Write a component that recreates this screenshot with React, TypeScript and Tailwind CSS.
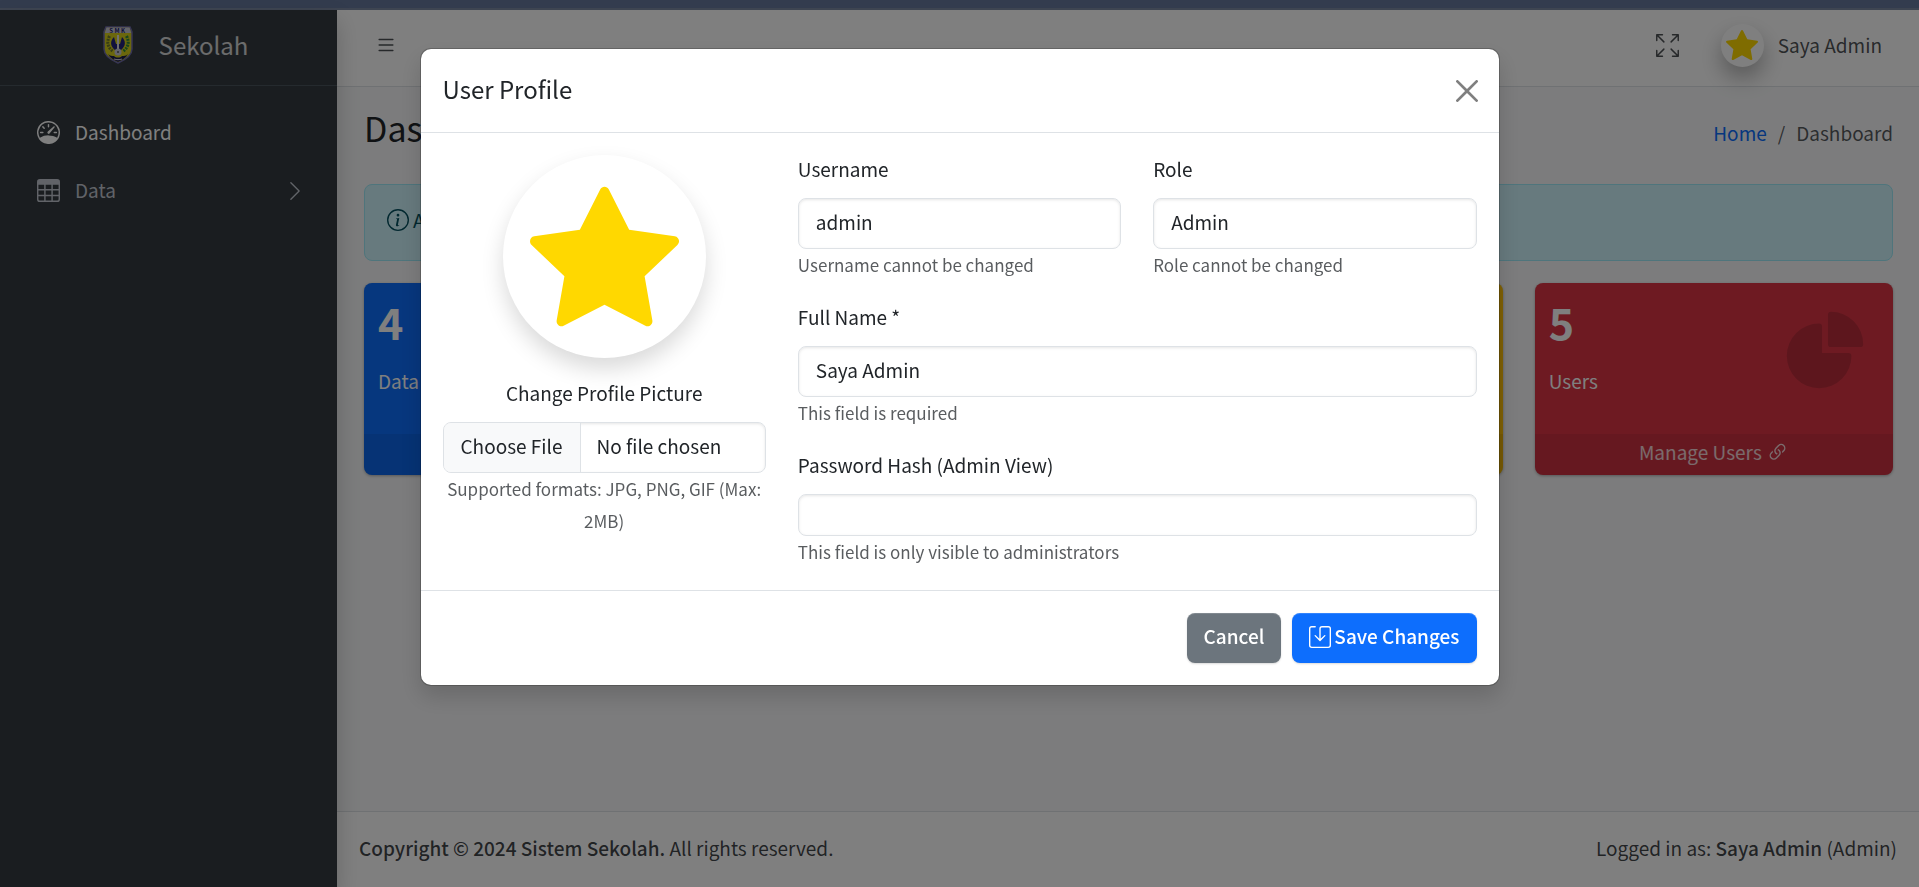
import type { InputHTMLAttributes, ReactNode } from "react";
import {
  BsArrowsFullscreen,
  BsChevronRight,
  BsInfoCircle,
  BsLink45Deg,
  BsList,
  BsSave,
  BsSpeedometer,
  BsStarFill,
  BsTable,
} from "react-icons/bs";

function SchoolLogo() {
  return (
    <svg viewBox="0 0 30 38" className="h-[38px] w-[30px]" aria-hidden="true">
      <path d="M3 1h24l2 5v17c0 6-7 11-14 14C8 34 1 29 1 23V6z" fill="#d6cf1a" stroke="#6d6aa8" strokeWidth="1.5" />
      <path d="M3.500 1.500h23l1.500 5.500H2z" fill="#c9c9d6" />
      <text x="15" y="6.500" textAnchor="middle" fontSize="6" fontWeight="700" letterSpacing="1.500" fill="#1c1c6a">SMK</text>
      <path d="M6.500 10c-3 6-2 11 3 15" fill="none" stroke="#6f7a2c" strokeWidth="3" strokeDasharray="2 1" />
      <path d="M23.500 10c3 6 2 11-3 15" fill="none" stroke="#2f8a3c" strokeWidth="3" strokeDasharray="2 1" />
      <path d="M11 11c-4 4-4 9 1 13h6c5-4 5-9 1-13l-2 7h-4z" fill="#23237a" />
      <path d="M14 9h2v14h-2z" fill="#e3e3e3" />
      <circle cx="15" cy="26" r="3.500" fill="#c9c9d6" />
      <circle cx="15" cy="26" r="1" fill="#555" />
      <path d="M5 28c2 2 4 2 6 2 2 2 6 2 8 0 2 0 4 0 6-2-2 4-6 6-10 8-4-2-8-4-10-8z" fill="#1c1c4c" />
      <path d="M11 33c3 1 5 1 8 0" fill="none" stroke="#c9c9d6" strokeWidth="1.200" />
    </svg>
  );
}

function PieIcon() {
  return (
    <svg viewBox="0 0 24 24" fill="currentColor" className="absolute right-[21px] top-5 size-[94px] text-black/15" aria-hidden="true">
      <path
        fillRule="evenodd"
        clipRule="evenodd"
        d="M2.250 13.500a8.250 8.250 0 0 1 8.250-8.250.75.75 0 0 1 .75.75v6.750H18a.75.75 0 0 1 .75.75 8.250 8.250 0 0 1-16.500 0Z"
      />
      <path
        fillRule="evenodd"
        clipRule="evenodd"
        d="M12.750 3a.75.75 0 0 1 .75-.75 8.250 8.250 0 0 1 8.250 8.250.75.75 0 0 1-.75.75h-7.500a.75.75 0 0 1-.75-.75V3Z"
      />
    </svg>
  );
}

function StatCard({ tone, value, label, action }: { tone: string; value?: string; label?: string; action?: string }) {
  return (
    <div className={`relative flex h-48 flex-col justify-between overflow-hidden rounded-lg text-white shadow-[0_1px_3px_rgba(0,0,0,0.3)] ${tone}`}>
      <div className="px-[14px] pt-[10px]">
        <h3 className="mb-4 h-14 text-[43px] font-bold leading-[56px]">{value}</h3>
        <p className="leading-8">{label}</p>
      </div>
      {value && <PieIcon />}
      <a href="#" className="flex h-[41px] items-center justify-center gap-1 bg-black/[0.07] pb-1 text-white/80">
        {action}
        {action && <BsLink45Deg className="size-[23px]" />}
      </a>
    </div>
  );
}

function Field({ id, label, hint, ...rest }: { id: string; label: ReactNode; hint: string } & InputHTMLAttributes<HTMLInputElement>) {
  return (
    <div className="flex flex-col">
      <label htmlFor={id} className="mb-[15px] leading-7">{label}</label>
      <input
        id={id}
        className="h-[51px] w-full rounded-lg border border-[#dee2e6] px-[17px] pb-1 shadow-[inset_0_1px_3px_rgba(0,0,0,0.1)] outline-none disabled:h-[42px] disabled:bg-white"
        {...rest}
      />
      <small className="text-[17px] leading-8 text-[#212529]/75">{hint}</small>
    </div>
  );
}

function ProfileDialog() {
  return (
    <div className="fixed inset-0 z-20 flex items-start justify-center bg-black/50 pt-12">
      <div
        role="dialog"
        aria-modal="true"
        aria-labelledby="profile-title"
        className="w-full max-w-[1080px] rounded-[11px] border border-black/20 bg-white bg-clip-padding text-[#212529] shadow-[0_11px_22px_rgba(0,0,0,0.15)]"
      >
        <header className="flex items-center justify-between border-b border-[#dee2e6] pb-[21px] pl-[22px] pr-[21px] pt-[22px]">
          <h5 id="profile-title" className="pb-1 text-2xl leading-9">User Profile</h5>
          <button type="button" aria-label="Close" className="text-black/50">
            <svg viewBox="0 0 16 16" fill="currentColor" className="size-[22px]">
              <path d="M.293.293a1 1 0 0 1 1.414 0L8 6.586 14.293.293a1 1 0 1 1 1.414 1.414L9.414 8l6.293 6.293a1 1 0 0 1-1.414 1.414L8 9.414l-6.293 6.293a1 1 0 0 1-1.414-1.414L6.586 8 .293 1.707a1 1 0 0 1 0-1.414" />
            </svg>
          </button>
        </header>
        <form>
          <div className="grid grid-cols-3 gap-8 px-[22px] py-[22px]">
            <div className="flex flex-col items-center text-center">
              <div className="mb-[21px] flex size-[203px] items-center justify-center rounded-full bg-white shadow-[0_11px_22px_rgba(0,0,0,0.15)]">
                <BsStarFill className="size-[149px] text-[#ffd800]" />
              </div>
              <label htmlFor="picture" className="mb-[15px] leading-7">Change Profile Picture</label>
              <input
                id="picture"
                type="file"
                className="h-[51px] w-full overflow-hidden rounded-lg border border-[#dee2e6] leading-[45px] shadow-[inset_0_1px_3px_rgba(0,0,0,0.1)] file:mr-4 file:h-[49px] file:border-0 file:border-r file:border-solid file:border-[#dee2e6] file:bg-[#f8f9fa] file:px-[17px] file:pb-1"
              />
              <small className="text-[17px] leading-8 text-[#212529]/75">Supported formats: JPG, PNG, GIF (Max: 2MB)</small>
            </div>
            <div className="col-span-2 flex flex-col gap-[22px]">
              <div className="grid grid-cols-2 gap-8">
                <Field id="username" label="Username" hint="Username cannot be changed" defaultValue="admin" readOnly />
                <Field id="role" label="Role" hint="Role cannot be changed" defaultValue="Admin" readOnly />
              </div>
              <Field id="fullname" label="Full Name *" hint="This field is required" defaultValue="Saya Admin" />
              <Field id="hash" label="Password Hash (Admin View)" hint="This field is only visible to administrators" disabled />
            </div>
          </div>
          <footer className="flex justify-end gap-[11px] border-t border-[#dee2e6] px-[22px] py-[22px] font-medium text-white">
            <button type="button" className="h-[50px] rounded-lg bg-[#6c757d] px-[17px] pb-[3px] shadow-[inset_0_1px_0_rgba(255,255,255,0.15),0_1px_2px_rgba(0,0,0,0.15)]">
              Cancel
            </button>
            <button type="button" className="flex h-[50px] items-center gap-[3px] rounded-lg bg-[#0d6efd] px-[17px] pb-[3px] shadow-[inset_0_1px_0_rgba(255,255,255,0.15),0_1px_2px_rgba(0,0,0,0.15)]">
              <BsSave className="size-[22px]" />
              Save Changes
            </button>
          </footer>
        </form>
      </div>
    </div>
  );
}

export default function App() {
  return (
    <div className="flex h-screen flex-col bg-[#f8f9fa] font-['Noto_Sans_CJK_SC',sans-serif] text-[19px] text-[#212529]">
      <div className="h-[10px] shrink-0 border-b-2 border-[#7d8aa3] bg-[#66789c]" />
      <div className="flex min-h-0 flex-1">
        <aside className="z-10 w-[337px] shrink-0 bg-[#343a40] shadow-[0_11px_22px_rgba(0,0,0,0.2)]">
          <a href="#" className="flex h-[76px] items-center justify-center gap-[26px] border-b border-[#4b545c] pb-[5px] pl-[14px] text-2xl text-white/80">
            <SchoolLogo />
            Sekolah
          </a>
          <nav className="flex flex-col gap-[5px] px-[11px] pt-5 text-[#c2c7d0]">
            <a href="#" className="flex h-[53px] items-center gap-[15px] pl-[26px] pr-5 text-white">
              <BsSpeedometer className="size-[23px]" />
              Dashboard
            </a>
            <a href="#" className="flex h-[53px] items-center gap-[15px] pl-[26px] pr-5">
              <BsTable className="size-[23px]" />
              Data
              <BsChevronRight className="ml-auto size-[22px]" />
            </a>
          </nav>
        </aside>
        <div className="flex min-w-0 flex-1 flex-col">
          <header className="flex h-[77px] shrink-0 items-center justify-between border-b border-[#dee2e6] bg-white pb-[6px] pl-[38px] pr-[37px] text-[#212529]/80">
            <button type="button" aria-label="Toggle sidebar"><BsList className="size-[22px]" /></button>
            <div className="flex items-center">
              <button type="button" aria-label="Fullscreen" className="mr-[42px]"><BsArrowsFullscreen className="size-[23px]" /></button>
              <button type="button" className="flex items-center gap-[14px]">
                <span className="flex size-[43px] items-center justify-center rounded-full bg-white shadow-[0_11px_22px_rgba(0,0,0,0.3)]">
                  <BsStarFill className="size-8 text-[#ffd800]" />
                </span>
                Saya Admin
              </button>
            </div>
          </header>
          <main className="flex-1 pl-[27px] pr-[26px] pt-[18px]">
            <div className="mb-[34px] flex h-[45px] items-center justify-between">
              <h1 className="text-[34px] leading-[45px]">Dashboard</h1>
              <nav aria-label="Breadcrumb" className="flex gap-[11px] pt-3 text-[#212529]/75">
                <a href="#" className="text-[#0d6efd]">Home</a>
                <span>/</span>
                <span>Dashboard</span>
              </nav>
            </div>
            <div role="alert" className="mb-[22px] flex h-[77px] items-start gap-1 rounded-lg border border-[#9eeaf9] bg-[#cff4fc] px-[22px] pt-[19px] leading-8 text-[#055160]">
              <BsInfoCircle className="mt-[5px] size-[22px]" />
              Admin
            </div>
            <section className="grid grid-cols-4 gap-8">
              <StatCard tone="bg-[#0d6efd]" value="4" label="Data" />
              <StatCard tone="bg-[#198754]" />
              <StatCard tone="bg-[#ffc107]" />
              <StatCard tone="bg-[#dc3545]" value="5" label="Users" action="Manage Users" />
            </section>
          </main>
          <footer className="flex h-[76px] shrink-0 items-center justify-between border-t border-[#dee2e6] bg-white px-[22px] pb-[2px] text-[#212529]/85">
            <p><strong className="font-medium">Copyright © 2024 Sistem Sekolah.</strong> All rights reserved.</p>
            <p>Logged in as: <strong className="font-medium">Saya Admin</strong> (Admin)</p>
          </footer>
        </div>
      </div>
      <ProfileDialog />
    </div>
  );
}
